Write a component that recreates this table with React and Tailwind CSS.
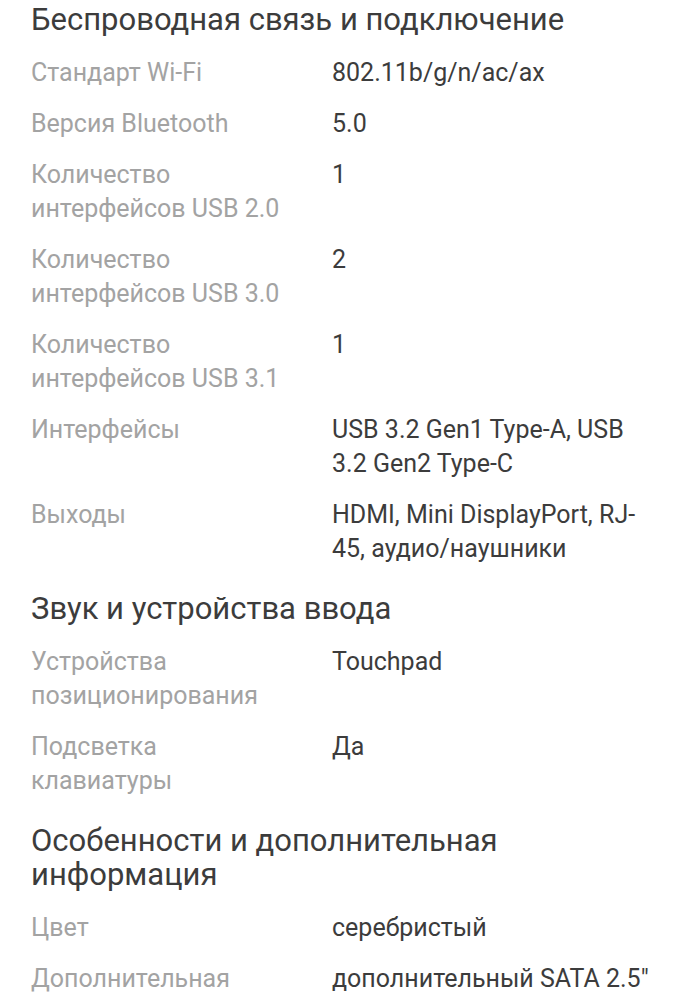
const sections = [
  {
    title: "Беспроводная связь и подключение",
    rows: [
      ["Стандарт Wi-Fi", "802.11b/g/n/ac/ax"],
      ["Версия Bluetooth", "5.0"],
      ["Количество интерфейсов USB 2.0", "1"],
      ["Количество интерфейсов USB 3.0", "2"],
      ["Количество интерфейсов USB 3.1", "1"],
      ["Интерфейсы", "USB 3.2 Gen1 Type-A, USB 3.2 Gen2 Type-C"],
      ["Выходы", "HDMI, Mini DisplayPort, RJ-45, аудио/наушники"],
    ],
  },
  {
    title: "Звук и устройства ввода",
    rows: [
      ["Устройства позиционирования", "Touchpad"],
      ["Подсветка клавиатуры", "Да"],
    ],
  },
  {
    title: "Особенности и дополнительная информация",
    rows: [
      ["Цвет", "серебристый"],
      ["Дополнительная информация", "дополнительный SATA 2.5\""],
    ],
  },
];

export default function App() {
  return (
    <div className="h-[999px] overflow-hidden bg-white px-[31px] pt-[3px] font-['Roboto',sans-serif]">
      {sections.map((s, i) => (
        <div key={i} className={i > 0 ? "mt-[26px]" : ""}>
          <h2 className="text-[31px] leading-[34px] text-[#3c3c3c] mb-[19px] pr-[40px]">
            {s.title}
          </h2>
          <div className="flex flex-col gap-[17px]">
            {s.rows.map(([label, value], j) => (
              <div key={j} className="grid grid-cols-[301px_1fr] text-[25px] leading-[34px]">
                <div className="text-[#a3a3a3] pr-[40px]">{label}</div>
                <div className="text-[#3c3c3c]">{value}</div>
              </div>
            ))}
          </div>
        </div>
      ))}
    </div>
  );
}
